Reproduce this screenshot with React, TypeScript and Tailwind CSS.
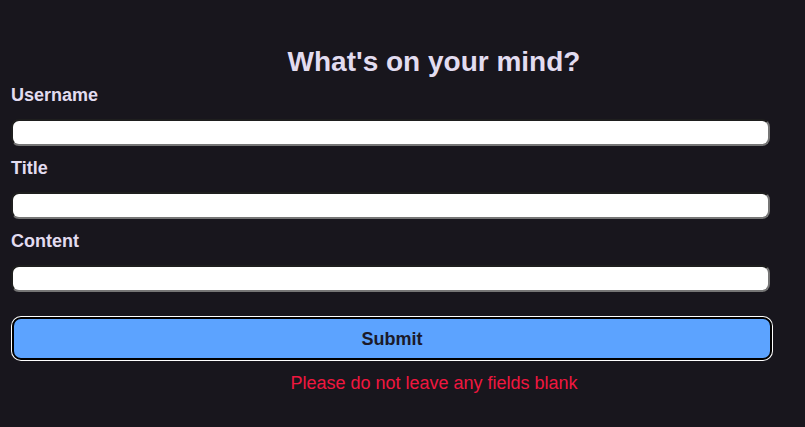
import React, { useState } from 'react';

const fields = ['Username', 'Title', 'Content'];

export default function App() {
  const [values, setValues] = useState<Record<string, string>>({});

  return (
    <div className="h-[427px] w-full overflow-hidden bg-[#18161d] font-['Liberation_Sans',Arial,sans-serif]">
      <div className="w-[857px] pl-[11px] pt-[46px]">
        <h1 className="text-center text-[28px] font-bold leading-[32px] text-[#e2dcf0]">What's on your mind?</h1>
        <form className="mt-[7px] w-[762px]" onSubmit={(e) => e.preventDefault()}>
          {fields.map((f) => (
            <div key={f} className="flex flex-col">
              <label className="text-lg font-bold leading-[20px] text-[#e2dcf0]">{f}</label>
              <input
                value={values[f] ?? ''}
                onChange={(e) => setValues({ ...values, [f]: e.target.value })}
                className="mt-[14px] mb-[12px] h-[27px] w-[759px] rounded-[8px] border-2 border-t-[#1e1e1e] border-l-[#1e1e1e] border-b-[#767676] border-r-[#767676] bg-white px-2 text-sm text-black outline-none"
              />
            </div>
          ))}
          <button
            type="submit"
            className="mt-[13px] ml-[1px] h-[43px] w-[760px] rounded-[9px] border-2 border-black bg-[#5ca3ff] text-lg font-bold text-[#1b1a2a] ring-1 ring-white"
          >
            Submit
          </button>
        </form>
        <p className="mt-[13px] text-center text-lg leading-[20px] text-[#f0173f]">Please do not leave any fields blank</p>
      </div>
    </div>
  );
}
